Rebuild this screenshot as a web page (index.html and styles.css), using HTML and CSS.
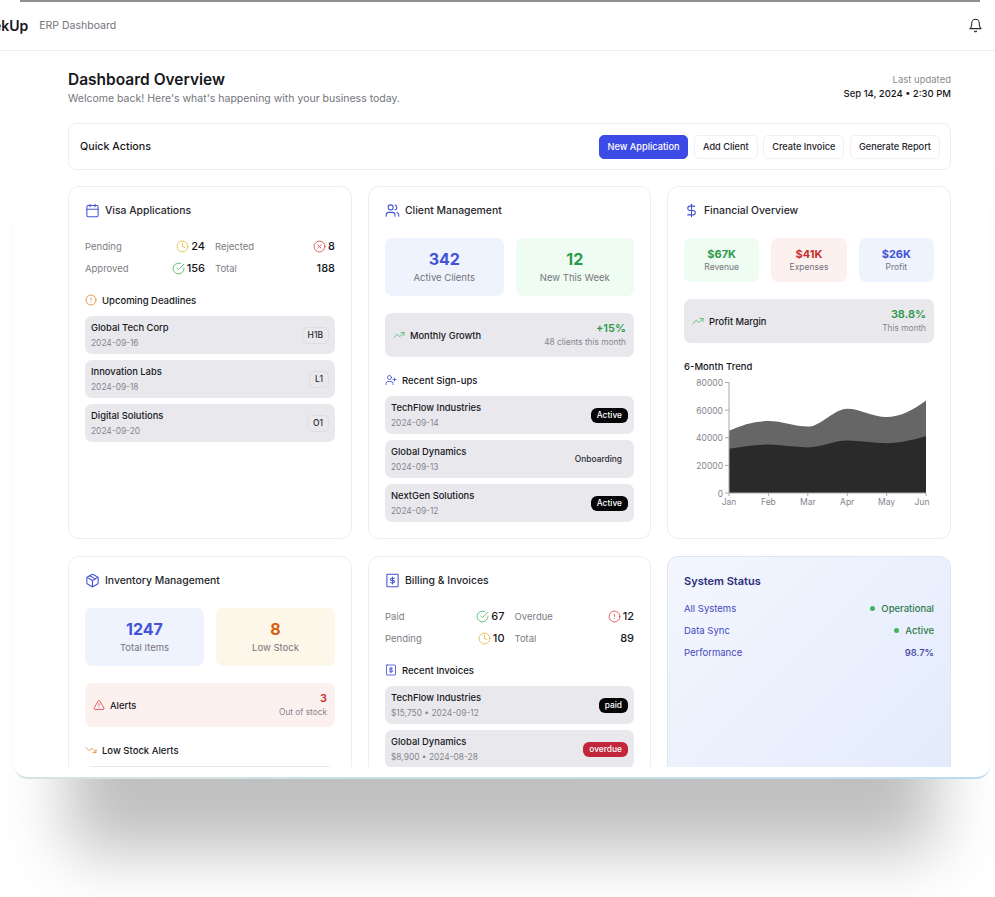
FILE: index.html
```html
<!DOCTYPE html>
<html lang="en">
<head>
  <meta charset="UTF-8" />
  <meta name="viewport" content="width=device-width, initial-scale=1.0"/>
  <title>ERP Dashboard</title>
  <link rel="stylesheet" href="styles.css">
</head>
<body>
  <svg class="icon-defs">
    <symbol id="i-calendar" viewBox="0 0 24 24"><rect x="3" y="4" width="18" height="18" rx="2"/><path d="M16 2v4M8 2v4M3 10h18"/></symbol>
    <symbol id="i-users" viewBox="0 0 24 24"><path d="M16 21v-2a4 4 0 0 0-4-4H6a4 4 0 0 0-4 4v2"/><circle cx="9" cy="7" r="4"/><path d="M22 21v-2a4 4 0 0 0-3-3.87"/><path d="M16 3.13a4 4 0 0 1 0 7.75"/></symbol>
    <symbol id="i-dollar" viewBox="0 0 24 24"><path d="M12 2v20"/><path d="M17 5H9.5a3.5 3.5 0 0 0 0 7h5a3.5 3.5 0 0 1 0 7H6"/></symbol>
    <symbol id="i-package" viewBox="0 0 24 24"><path d="M11 21.73a2 2 0 0 0 2 0l7-4A2 2 0 0 0 21 16V8a2 2 0 0 0-1-1.73l-7-4a2 2 0 0 0-2 0l-7 4A2 2 0 0 0 3 8v8a2 2 0 0 0 1 1.73z"/><path d="M12 22V12"/><path d="m3.3 7 8.7 5 8.7-5"/><path d="m7.5 4.27 9 5.15"/></symbol>
    <symbol id="i-bill" viewBox="0 0 24 24"><rect x="3" y="2" width="18" height="20" rx="1"/><path d="M15 8.5h-4.5a1.75 1.75 0 0 0 0 3.5h3a1.75 1.75 0 0 1 0 3.5H9"/><path d="M12 6.5v11"/></symbol>
    <symbol id="i-clock" viewBox="0 0 24 24"><circle cx="12" cy="12" r="10"/><path d="M12 6v6l4 2"/></symbol>
    <symbol id="i-check" viewBox="0 0 24 24"><path d="M22 11.08V12a10 10 0 1 1-5.93-9.14"/><path d="m9 11 3 3L22 4"/></symbol>
    <symbol id="i-cross" viewBox="0 0 24 24"><circle cx="12" cy="12" r="10"/><path d="m15 9-6 6"/><path d="m9 9 6 6"/></symbol>
    <symbol id="i-alert" viewBox="0 0 24 24"><circle cx="12" cy="12" r="10"/><path d="M12 8v4"/><path d="M12 16h.01"/></symbol>
    <symbol id="i-up" viewBox="0 0 24 24"><path d="M22 7l-8.5 8.5-5-5L2 17"/><path d="M16 7h6v6"/></symbol>
    <symbol id="i-down" viewBox="0 0 24 24"><path d="M22 17l-8.5-8.5-5 5L2 7"/><path d="M16 17h6v-6"/></symbol>
    <symbol id="i-userplus" viewBox="0 0 24 24"><path d="M16 21v-2a4 4 0 0 0-4-4H6a4 4 0 0 0-4 4v2"/><circle cx="9" cy="7" r="4"/><path d="M19 8v6"/><path d="M22 11h-6"/></symbol>
    <symbol id="i-warning" viewBox="0 0 24 24"><path d="m21.73 18-8-14a2 2 0 0 0-3.48 0l-8 14A2 2 0 0 0 4 21h16a2 2 0 0 0 1.73-3"/><path d="M12 9v4"/><path d="M12 17h.01"/></symbol>
    <symbol id="i-bell" viewBox="0 0 24 24"><path d="M6 8a6 6 0 0 1 12 0c0 7 3 9 3 9H3s3-2 3-9"/><path d="M10.3 21a1.94 1.94 0 0 0 3.4 0"/></symbol>
  </svg>

  <div class="frame">
    <div class="top-line"></div>
    <header class="topbar">
      <div class="topbar-left">
        <span class="brand">ekUp</span>
        <span class="brand-sub">ERP Dashboard</span>
      </div>
      <svg class="icon bell"><use href="#i-bell"/></svg>
    </header>

    <main class="content">
      <div class="page-head">
        <div>
          <h1>Dashboard Overview</h1>
          <p class="welcome">Welcome back! Here's what's happening with your business today.</p>
        </div>
        <div class="updated">
          <p class="updated-label">Last updated</p>
          <p class="updated-time">Sep 14, 2024 • 2:30 PM</p>
        </div>
      </div>

      <section class="quick">
        <h2>Quick Actions</h2>
        <div class="quick-btns">
          <button class="btn btn-primary">New Application</button>
          <button class="btn">Add Client</button>
          <button class="btn">Create Invoice</button>
          <button class="btn">Generate Report</button>
        </div>
      </section>

      <div class="cards">
        <section class="card">
          <div class="card-title"><svg class="icon blue"><use href="#i-calendar"/></svg>Visa Applications</div>
          <div class="stats">
            <div class="stat"><span class="stat-label">Pending</span><span class="stat-value"><svg class="icon-stat yellow"><use href="#i-clock"/></svg>24</span></div>
            <div class="stat"><span class="stat-label">Rejected</span><span class="stat-value"><svg class="icon-stat red"><use href="#i-cross"/></svg>8</span></div>
            <div class="stat"><span class="stat-label">Approved</span><span class="stat-value"><svg class="icon-stat green"><use href="#i-check"/></svg>156</span></div>
            <div class="stat"><span class="stat-label">Total</span><span class="stat-value">188</span></div>
          </div>
          <div class="sub-title"><svg class="icon-sm orange"><use href="#i-alert"/></svg>Upcoming Deadlines</div>
          <div class="list">
            <div class="row"><div><p class="row-name">Global Tech Corp</p><p class="row-meta">2024-09-16</p></div><span class="tag">H1B</span></div>
            <div class="row"><div><p class="row-name">Innovation Labs</p><p class="row-meta">2024-09-18</p></div><span class="tag">L1</span></div>
            <div class="row"><div><p class="row-name">Digital Solutions</p><p class="row-meta">2024-09-20</p></div><span class="tag">O1</span></div>
          </div>
        </section>

        <section class="card">
          <div class="card-title"><svg class="icon blue"><use href="#i-users"/></svg>Client Management</div>
          <div class="tiles">
            <div class="tile tile-blue"><p class="tile-num blue">342</p><p class="tile-label">Active Clients</p></div>
            <div class="tile tile-green"><p class="tile-num green-dark">12</p><p class="tile-label">New This Week</p></div>
          </div>
          <div class="summary">
            <div class="summary-left"><svg class="icon-sm green"><use href="#i-up"/></svg>Monthly Growth</div>
            <div class="summary-right"><p class="summary-num green-dark">+15%</p><p class="summary-note">48 clients this month</p></div>
          </div>
          <div class="sub-title"><svg class="icon-sm blue"><use href="#i-userplus"/></svg>Recent Sign-ups</div>
          <div class="list">
            <div class="row"><div><p class="row-name">TechFlow Industries</p><p class="row-meta">2024-09-14</p></div><span class="pill pill-dark">Active</span></div>
            <div class="row"><div><p class="row-name">Global Dynamics</p><p class="row-meta">2024-09-13</p></div><span class="pill">Onboarding</span></div>
            <div class="row"><div><p class="row-name">NextGen Solutions</p><p class="row-meta">2024-09-12</p></div><span class="pill pill-dark">Active</span></div>
          </div>
        </section>

        <section class="card">
          <div class="card-title"><svg class="icon blue"><use href="#i-dollar"/></svg>Financial Overview</div>
          <div class="tiles tiles-three">
            <div class="tile tile-small tile-green"><p class="tile-num-small green-dark">$67K</p><p class="tile-label-small">Revenue</p></div>
            <div class="tile tile-small tile-red"><p class="tile-num-small red-dark">$41K</p><p class="tile-label-small">Expenses</p></div>
            <div class="tile tile-small tile-blue"><p class="tile-num-small blue">$26K</p><p class="tile-label-small">Profit</p></div>
          </div>
          <div class="summary">
            <div class="summary-left"><svg class="icon-sm green"><use href="#i-up"/></svg>Profit Margin</div>
            <div class="summary-right"><p class="summary-num green-dark">38.8%</p><p class="summary-note">This month</p></div>
          </div>
          <p class="trend-title">6-Month Trend</p>
          <svg class="chart" viewBox="0 0 249 132" width="249" height="132">
            <path class="area-top" d="M45 53.8C58 48 71 44.1 84.4 44.1C97.5 44.1 110.7 49.6 123.8 49.6C137 49.6 150 31.7 163.2 31.7C176 31.7 189 40 202.6 40C215.7 40 229 33 242 23.4L242 116L45 116Z"/>
            <path class="area-bottom" d="M45 71.8C58 69.5 71 67.6 84.4 67.6C97.5 67.6 110.7 70.4 123.8 70.4C137 70.4 150 63.5 163.2 63.5C176 63.5 189 66.2 202.6 66.2C215.7 66.2 229 63 242 59.3L242 116L45 116Z"/>
            <path class="axis" d="M41 5.5H45V116H242M41 33.1H45M41 60.8H45M41 88.4H45M41 116H45M45 116v3M84.4 116v3M123.8 116v3M163.2 116v3M202.6 116v3M242 116v3"/>
            <g class="y-labels">
              <text x="39" y="9">80000</text>
              <text x="39" y="36.5">60000</text>
              <text x="39" y="64">40000</text>
              <text x="39" y="91.8">20000</text>
              <text x="39" y="119.5">0</text>
            </g>
            <g class="x-labels">
              <text x="45" y="128">Jan</text>
              <text x="84.4" y="128">Feb</text>
              <text x="123.8" y="128">Mar</text>
              <text x="163.2" y="128">Apr</text>
              <text x="202.6" y="128">May</text>
              <text x="238" y="128">Jun</text>
            </g>
          </svg>
        </section>

        <section class="card">
          <div class="card-title"><svg class="icon blue"><use href="#i-package"/></svg>Inventory Management</div>
          <div class="tiles">
            <div class="tile tile-blue"><p class="tile-num blue">1247</p><p class="tile-label">Total Items</p></div>
            <div class="tile tile-orange"><p class="tile-num orange-dark">8</p><p class="tile-label">Low Stock</p></div>
          </div>
          <div class="summary summary-red">
            <div class="summary-left"><svg class="icon-sm red"><use href="#i-warning"/></svg>Alerts</div>
            <div class="summary-right"><p class="summary-num red-dark">3</p><p class="summary-note">Out of stock</p></div>
          </div>
          <div class="sub-title"><svg class="icon-sm orange"><use href="#i-down"/></svg>Low Stock Alerts</div>
          <div class="list">
            <div class="row"></div>
          </div>
        </section>

        <section class="card">
          <div class="card-title"><svg class="icon blue"><use href="#i-bill"/></svg>Billing &amp; Invoices</div>
          <div class="stats">
            <div class="stat"><span class="stat-label">Paid</span><span class="stat-value"><svg class="icon-stat green"><use href="#i-check"/></svg>67</span></div>
            <div class="stat"><span class="stat-label">Overdue</span><span class="stat-value"><svg class="icon-stat red"><use href="#i-alert"/></svg>12</span></div>
            <div class="stat"><span class="stat-label">Pending</span><span class="stat-value"><svg class="icon-stat yellow"><use href="#i-clock"/></svg>10</span></div>
            <div class="stat"><span class="stat-label">Total</span><span class="stat-value">89</span></div>
          </div>
          <div class="sub-title"><svg class="icon-sm blue"><use href="#i-bill"/></svg>Recent Invoices</div>
          <div class="list">
            <div class="row"><div><p class="row-name">TechFlow Industries</p><p class="row-meta">$15,750 • 2024-09-12</p></div><span class="pill pill-dark">paid</span></div>
            <div class="row"><div><p class="row-name">Global Dynamics</p><p class="row-meta">$8,900 • 2024-08-28</p></div><span class="pill pill-red">overdue</span></div>
          </div>
        </section>

        <section class="card card-status">
          <h3>System Status</h3>
          <div class="status-row"><span>All Systems</span><span class="status-value"><i class="dot"></i>Operational</span></div>
          <div class="status-row"><span>Data Sync</span><span class="status-value"><i class="dot"></i>Active</span></div>
          <div class="status-row"><span>Performance</span><span class="status-value status-plain">98.7%</span></div>
        </section>
      </div>
    </main>
  </div>
</body>
</html>
```

FILE: styles.css
```css
* {
  box-sizing: border-box;
}
html, body {
  height: 100%;
}
body {
  margin: 0;
  background-color: #ffffff;
  color: #17171c;
  font-family: Inter, "Liberation Sans", sans-serif;
  overflow: hidden;
}
p, h1, h2, h3 {
  margin: 0;
}
.icon-defs {
  display: none;
}

/* window */
.frame {
  height: 779px;
  margin: 0 5px 0 14px;
  background: linear-gradient(#ffffff, #ffffff) padding-box, linear-gradient(90deg, #d3e5de, #b9dbf0) border-box;
  border-bottom: 2px solid transparent;
  border-radius: 0 0 14px 14px;
  box-shadow: 0 127px 60px -55px rgba(0,0,0,0.25);
}
.top-line {
  height: 2px;
  margin: 0 10px 0 6px;
  background-color: #8f8f8f;
}
.topbar {
  height: 49px;
  margin: 0 -5px 0 -14px;
  padding: 0 12px 2px 0;
  display: flex;
  align-items: center;
  justify-content: space-between;
  border-bottom: 1px solid #ececee;
}
.topbar-left {
  display: flex;
  align-items: center;
  gap: 11px;
}
.brand {
  margin-left: -7px;
  font-size: 14px;
  font-weight: 600;
}
.brand-sub {
  font-size: 10.5px;
  color: #74747c;
}
.bell {
  width: 12px;
  height: 12px;
  color: #2a2a30;
}

/* icons */
.icon, .icon-sm, .icon-stat {
  fill: none;
  stroke: currentColor;
  stroke-width: 2;
  stroke-linecap: round;
  stroke-linejoin: round;
  flex: none;
}
.icon {
  width: 15px;
  height: 15px;
  stroke-width: 1.7;
}
.icon-sm {
  width: 12px;
  height: 12px;
  stroke-width: 1.7;
}
.icon-stat {
  width: 13px;
  height: 13px;
  stroke-width: 1.6;
}
.blue { color: #4352d6; }
.yellow { color: #e2b93b; }
.green { color: #4db868; }
.red { color: #dc4a4a; }
.orange { color: #e58a2e; }
.green-dark { color: #2c9a4a; }
.red-dark { color: #c62f2b; }
.orange-dark { color: #d6600f; }

/* page head */
.content {
  height: 716px;
  padding: 0 39px 0 54px;
  overflow: hidden;
}
.page-head {
  display: flex;
  justify-content: space-between;
  padding-top: 19px;
}
h1 {
  font-size: 15.5px;
  line-height: 19px;
  font-weight: 600;
}
.welcome {
  margin-top: 3px;
  font-size: 10.5px;
  line-height: 14px;
  color: #74747c;
}
.updated {
  padding-top: 3px;
  text-align: right;
}
.updated-label {
  font-size: 9.5px;
  line-height: 14px;
  color: #8b8b92;
}
.updated-time {
  font-size: 9.5px;
  line-height: 14px;
  font-weight: 500;
}

.quick {
  margin-top: 17px;
  height: 47px;
  padding: 0 10px 0 11px;
  display: flex;
  align-items: center;
  justify-content: space-between;
  border: 1px solid #eeeef0;
  border-radius: 8px;
}
.quick h2 {
  font-size: 10.7px;
  font-weight: 500;
}
.quick-btns {
  display: flex;
  gap: 5.5px;
}
.btn {
  height: 24px;
  padding: 0 8px;
  font-family: inherit;
  font-size: 9.2px;
  font-weight: 500;
  color: #24242a;
  background-color: #ffffff;
  border: 1px solid #f0f0f2;
  border-radius: 5px;
}
.btn-primary {
  color: #ffffff;
  background-color: #3c4ae6;
  border-color: #3c4ae6;
}

/* cards */
.cards {
  margin-top: 16px;
  display: grid;
  grid-template-columns: 284px 283px 284px;
  grid-auto-rows: 353px;
  column-gap: 16px;
  row-gap: 17px;
}
.card {
  padding: 16px;
  border: 1px solid #eeeef0;
  border-radius: 11px;
}
.card-title {
  height: 14px;
  display: flex;
  align-items: center;
  gap: 5px;
  font-size: 10.4px;
  font-weight: 500;
  color: #26262c;
}

.stats {
  margin-top: 18px;
  display: grid;
  grid-template-columns: 1fr 1fr;
  column-gap: 10px;
}
.stat {
  height: 22px;
  display: flex;
  align-items: center;
  justify-content: space-between;
}
.stat-label {
  font-size: 9.5px;
  color: #7c7c84;
}
.stat-value {
  display: flex;
  align-items: center;
  gap: 2px;
  font-size: 11px;
  font-weight: 500;
}
.sub-title {
  margin-top: 15px;
  height: 12px;
  display: flex;
  align-items: center;
  gap: 5px;
  font-size: 9.5px;
  font-weight: 500;
}
.summary + .sub-title {
  margin-top: 17px;
}
.list {
  margin-top: 10px;
  display: flex;
  flex-direction: column;
  gap: 6px;
}
.row {
  height: 38px;
  padding: 0 6px;
  display: flex;
  align-items: center;
  justify-content: space-between;
  background-color: #e9e9ed;
  border-radius: 7px;
}
.row-name {
  font-size: 9.4px;
  line-height: 14px;
  font-weight: 500;
}
.row-meta {
  margin-top: 2px;
  font-size: 8.4px;
  line-height: 13px;
  color: #85858d;
}
.tag {
  padding: 2px 5px;
  font-size: 8.5px;
  line-height: 11px;
  font-weight: 500;
  color: #2b2b31;
  border: 1px solid #dddde2;
  border-radius: 5px;
}
.pill {
  padding: 2px 6px;
  font-size: 8.4px;
  line-height: 11px;
  font-weight: 500;
  color: #2b2b31;
  border-radius: 6px;
}
.pill-dark {
  color: #ffffff;
  background-color: #050507;
}
.pill-red {
  color: #ffffff;
  background-color: #c1263a;
}

/* tiles */
.tiles {
  margin-top: 21px;
  display: grid;
  grid-template-columns: 1fr 1fr;
  gap: 12px;
}
.tiles-three {
  grid-template-columns: 1fr 1fr 1fr;
}
.tile {
  height: 58px;
  display: flex;
  flex-direction: column;
  align-items: center;
  justify-content: center;
  border-radius: 7px;
}
.tile-small {
  height: 44px;
}
.tile-blue { background-color: #eef3fe; }
.tile-green { background-color: #effcf2; }
.tile-red { background-color: #fdf1f0; }
.tile-orange { background-color: #fdf7ea; }
.tile-num {
  font-size: 16px;
  line-height: 20px;
  font-weight: 700;
}
.tile-label {
  margin-top: 2px;
  font-size: 9.5px;
  line-height: 14px;
  color: #74747c;
}
.tile-num-small {
  font-size: 11px;
  line-height: 14px;
  font-weight: 700;
}
.tile-label-small {
  font-size: 8.5px;
  line-height: 12px;
  color: #74747c;
}

.summary {
  margin-top: 17px;
  height: 44px;
  padding: 0 8px;
  display: flex;
  align-items: center;
  justify-content: space-between;
  background-color: #e9e9ed;
  border-radius: 7px;
}
.summary-red {
  background-color: #fdf1f0;
}
.summary-left {
  display: flex;
  align-items: center;
  gap: 5px;
  font-size: 9.3px;
  font-weight: 500;
}
.summary-right {
  text-align: right;
}
.summary-num {
  font-size: 11px;
  line-height: 14px;
  font-weight: 600;
}
.summary-note {
  margin-top: 1px;
  font-size: 8.3px;
  line-height: 13px;
  color: #85858d;
}

/* chart */
.trend-title {
  margin-top: 18px;
  font-size: 9.5px;
  line-height: 12px;
  font-weight: 500;
}
.chart {
  display: block;
  margin-top: 4px;
}
.area-top { fill: #666666; }
.area-bottom { fill: #2a2a2a; }
.axis {
  fill: none;
  stroke: #a8a8ac;
  stroke-width: 1;
}
.chart text {
  font-size: 8.5px;
  fill: #85858d;
}
.y-labels text {
  text-anchor: end;
}
.x-labels text {
  text-anchor: middle;
}

/* system status */
.card-status {
  padding-top: 17px;
  background: linear-gradient(135deg, #f3f6fe, #dfe8fb);
  border-color: #dfe4f2;
}
.card-status h3 {
  font-size: 11px;
  line-height: 14px;
  font-weight: 600;
  color: #2c2f7a;
}
.status-row {
  height: 22px;
  display: flex;
  align-items: center;
  justify-content: space-between;
  font-size: 9.5px;
  color: #4548c0;
}
.card-status h3 + .status-row {
  margin-top: 9px;
}
.status-value {
  display: flex;
  align-items: center;
  gap: 6px;
  font-weight: 500;
  color: #2f7a4a;
}
.status-plain {
  color: #3a3f9a;
}
.dot {
  width: 5px;
  height: 5px;
  border-radius: 50%;
  background-color: #3fb55f;
}
```
